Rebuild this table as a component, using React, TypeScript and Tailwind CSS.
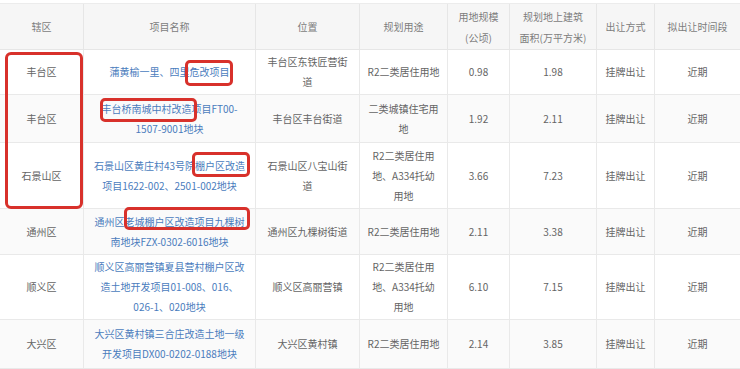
import React from 'react';

const cols = 'grid grid-cols-[84px_172px_104px_88px_62px_87px_58px_85px]';

const rows = [
  { d: '丰台区', name: ['蒲黄榆一里、四里危改项目'], loc: ['丰台区东铁匠营街', '道'], use: ['R2二类居住用地'], area: '0.98', build: '1.98', h: 'h-[45px]', bg: 'bg-white' },
  { d: '丰台区', name: ['丰台桥南城中村改造项目FT00-', '1507-9001地块'], loc: ['丰台区丰台街道'], use: ['二类城镇住宅用', '地'], area: '1.92', build: '2.11', h: 'h-[48px]', bg: 'bg-[#fafafa]' },
  { d: '石景山区', name: ['石景山区黄庄村43号院棚户区改造', '项目1622-002、2501-002地块'], loc: ['石景山区八宝山街', '道'], use: ['R2二类居住用', '地、A334托幼', '用地'], area: '3.66', build: '7.23', h: 'h-[66px]', bg: 'bg-white' },
  { d: '通州区', name: ['通州区老城棚户区改造项目九棵树', '南地块FZX-0302-6016地块'], loc: ['通州区九棵树街道'], use: ['R2二类居住用地'], area: '2.11', build: '3.38', h: 'h-[46px]', bg: 'bg-[#fafafa]' },
  { d: '顺义区', name: ['顺义区高丽营镇夏县营村棚户区改', '造土地开发项目01-008、016、', '026-1、020地块'], loc: ['顺义区高丽营镇'], use: ['R2二类居住用', '地、A334托幼', '用地'], area: '6.10', build: '7.15', h: 'h-[65px]', bg: 'bg-white' },
  { d: '大兴区', name: ['大兴区黄村镇三合庄改造土地一级', '开发项目DX00-0202-0188地块'], loc: ['大兴区黄村镇'], use: ['R2二类居住用地'], area: '2.14', build: '3.85', h: 'h-[49px]', bg: 'bg-[#fafafa]' },
];

function Cell({ lines, last, blue }: { lines: string[]; last?: boolean; blue?: boolean }) {
  return (
    <div className={`flex flex-col items-center justify-center text-center border-b border-[#e9e9e9] ${last ? '' : 'border-r'} ${blue ? 'text-[#4a7cbd]' : ''}`}>
      {lines.map((l, i) => (
        <div key={i} className="whitespace-nowrap leading-[20px]">{l}</div>
      ))}
    </div>
  );
}

export default function App() {
  const head = [['辖区'], ['项目名称'], ['位置'], ['规划用途'], ['用地规模', '(公顷)'], ['规划地上建筑', '面积(万平方米)'], ['出让方式'], ['拟出让时间段']];
  return (
    <div className="relative w-[740px] h-[369px] overflow-hidden bg-white text-[10px] text-[#646464]" style={{ fontFamily: '"Noto Sans CJK SC", "Noto Sans", sans-serif' }}>
      <div className="h-[3px]" />
      <div className={`${cols} h-[47px] bg-[#f6f6f6] text-[#7d7d7d] border-t border-[#ececec]`}>
        {head.map((h, i) => (
          <div key={i} className={`flex flex-col items-center justify-center text-center border-b border-[#e6e6e6] ${i === 7 ? '' : 'border-r'}`}>
            {h.map((l, j) => <div key={j} className="whitespace-nowrap leading-[21px]">{l}</div>)}
          </div>
        ))}
      </div>
      {rows.map((r, i) => (
        <div key={i} className={`${cols} ${r.h} ${r.bg}`}>
          <Cell lines={[r.d]} />
          <Cell lines={r.name} blue />
          <Cell lines={r.loc} />
          <Cell lines={r.use} />
          <Cell lines={[r.area]} />
          <Cell lines={[r.build]} />
          <Cell lines={['挂牌出让']} />
          <Cell lines={['近期']} last />
        </div>
      ))}

      {/* red annotation boxes */}
      <div className="absolute left-[5px] top-[52px] w-[78px] h-[157px] border-[3px] border-[#d8312b] rounded-[6px]" />
      <div className="absolute left-[185px] top-[60px] w-[48px] h-[26px] border-[3px] border-[#d8312b] rounded-[5px]" />
      <div className="absolute left-[100px] top-[98px] w-[97px] h-[24px] border-[3px] border-[#d8312b] rounded-[5px]" />
      <div className="absolute left-[192px] top-[152px] w-[58px] h-[25px] border-[3px] border-[#d8312b] rounded-[5px]" />
      <div className="absolute left-[124px] top-[207px] w-[126px] h-[23px] border-[3px] border-[#d8312b] rounded-[5px]" />
    </div>
  );
}
